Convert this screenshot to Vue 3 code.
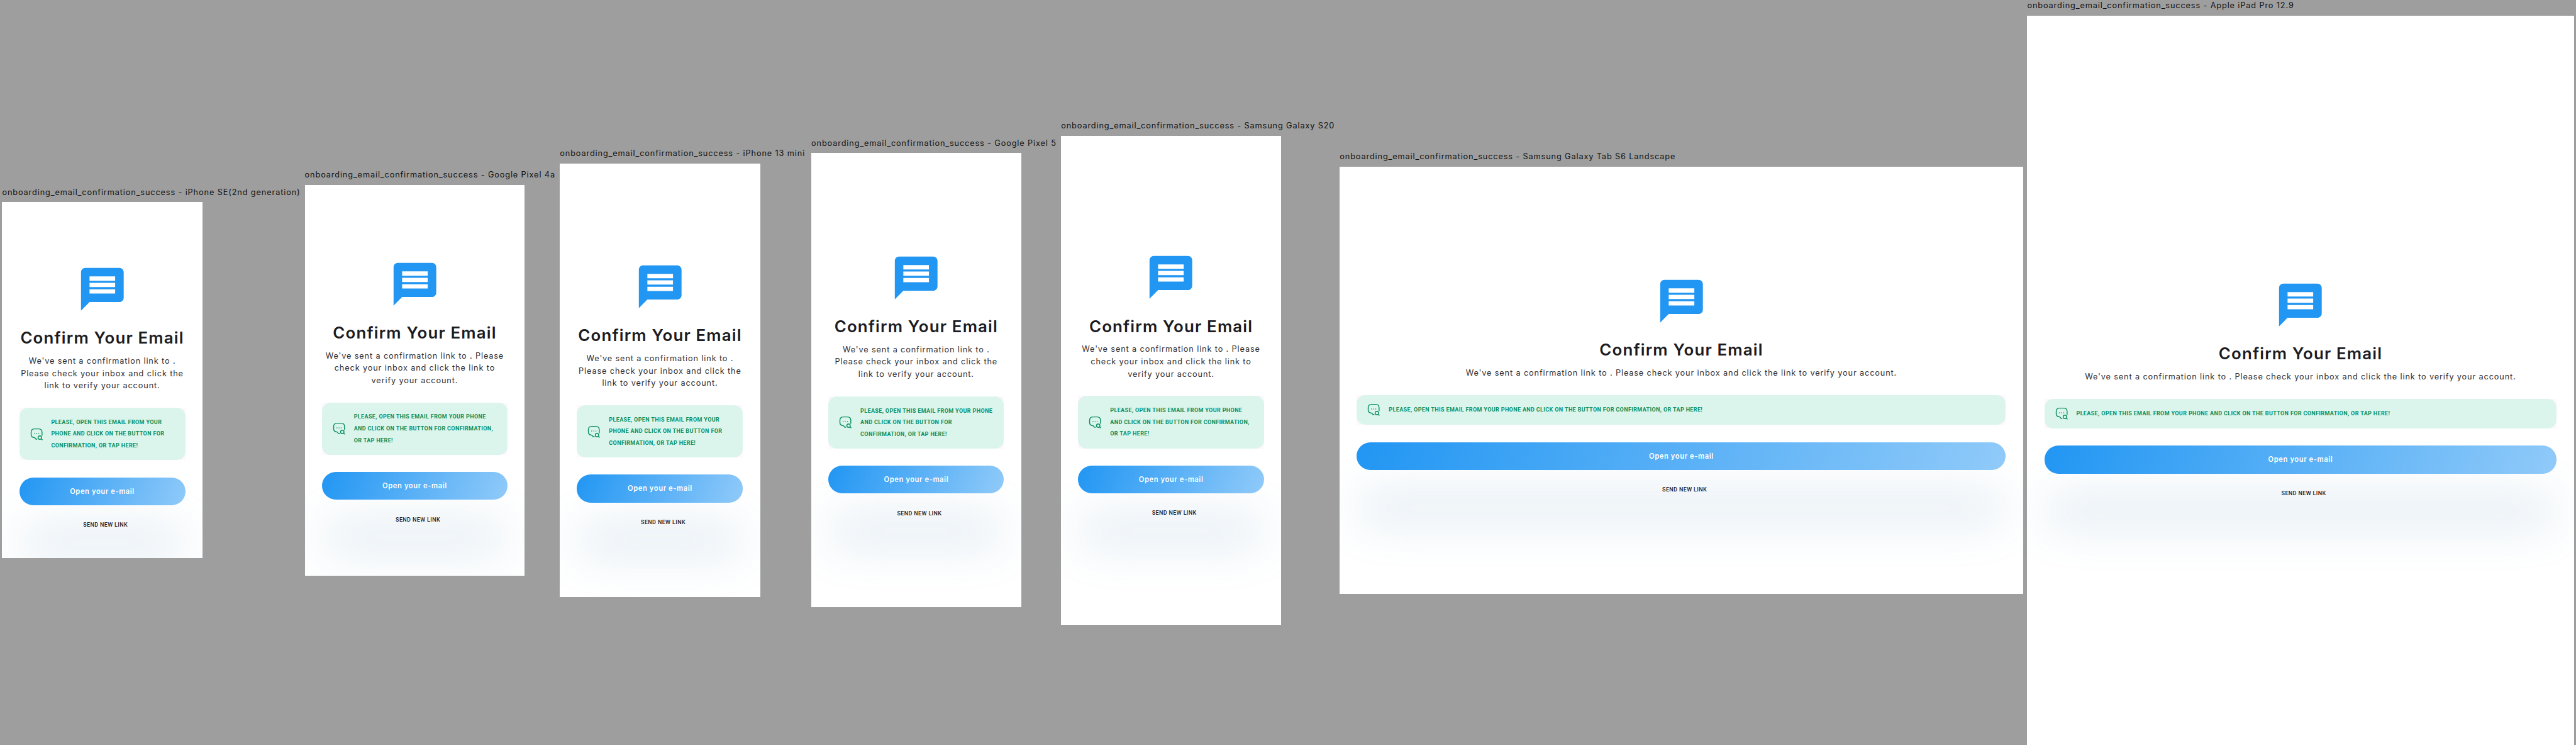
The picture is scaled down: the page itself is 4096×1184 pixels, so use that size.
<script setup>
const suite = 'onboarding_email_confirmation_success'

// slot: width taken in the row; top: distance from the screen edge to the illustration
const devices = [
  { name: 'iPhone SE(2nd generation)', slot: 559, width: 375, height: 667, top: 115.3,
    body: ["We've sent a confirmation link to .", 'Please check your inbox and click the', 'link to verify your account.'],
    hint: ['PLEASE, OPEN THIS EMAIL FROM YOUR', 'PHONE AND CLICK ON THE BUTTON FOR', 'CONFIRMATION, OR TAP HERE!'] },
  { name: 'Google Pixel 4a', slot: 470, width: 412, height: 732, top: 138,
    body: ["We've sent a confirmation link to . Please", 'check your inbox and click the link to', 'verify your account.'],
    hint: ['PLEASE, OPEN THIS EMAIL FROM YOUR PHONE', 'AND CLICK ON THE BUTTON FOR CONFIRMATION,', 'OR TAP HERE!'] },
  { name: 'iPhone 13 mini', slot: 463, width: 375, height: 812, top: 183,
    body: ["We've sent a confirmation link to .", 'Please check your inbox and click the', 'link to verify your account.'],
    hint: ['PLEASE, OPEN THIS EMAIL FROM YOUR', 'PHONE AND CLICK ON THE BUTTON FOR', 'CONFIRMATION, OR TAP HERE!'] },
  { name: 'Google Pixel 5', slot: 460, width: 393, height: 851, top: 185.8,
    body: ["We've sent a confirmation link to .", 'Please check your inbox and click the', 'link to verify your account.'],
    hint: ['PLEASE, OPEN THIS EMAIL FROM YOUR PHONE', 'AND CLICK ON THE BUTTON FOR', 'CONFIRMATION, OR TAP HERE!'] },
  { name: 'Samsung Galaxy S20', slot: 514, width: 412, height: 915, top: 217.2,
    body: ["We've sent a confirmation link to . Please", 'check your inbox and click the link to', 'verify your account.'],
    hint: ['PLEASE, OPEN THIS EMAIL FROM YOUR PHONE', 'AND CLICK ON THE BUTTON FOR CONFIRMATION,', 'OR TAP HERE!'] },
  { name: 'Samsung Galaxy Tab S6 Landscape', slot: 1280, width: 1280, height: 800, top: 204.2,
    body: ["We've sent a confirmation link to . Please check your inbox and click the link to verify your account."],
    hint: ['PLEASE, OPEN THIS EMAIL FROM YOUR PHONE AND CLICK ON THE BUTTON FOR CONFIRMATION, OR TAP HERE!'] },
  { name: 'Apple iPad Pro 12.9', slot: 1024, width: 1024, height: 1366, top: 494.2,
    body: ["We've sent a confirmation link to . Please check your inbox and click the link to verify your account."],
    hint: ['PLEASE, OPEN THIS EMAIL FROM YOUR PHONE AND CLICK ON THE BUTTON FOR CONFIRMATION, OR TAP HERE!'] }
]
</script>

<template>
  <main class="board">
    <section v-for="d in devices" :key="d.name" class="device" :style="{ width: d.slot + 'px' }">
      <div class="label">{{ suite }} - {{ d.name }}</div>
      <div class="screen" :style="{ width: d.width + 'px', height: d.height + 'px', paddingTop: d.top + 'px' }">
        <svg class="message" viewBox="0 0 24 24">
          <path d="M20 2H4c-1.1 0-1.99.9-1.99 2L2 22l4-4h14c1.1 0 2-.9 2-2V4c0-1.1-.9-2-2-2zm-2 12H6v-2h12v2zm0-3H6V9h12v2zm0-3H6V6h12v2z" />
        </svg>
        <h1 class="title">Confirm Your Email</h1>
        <p class="body">
          <span v-for="line in d.body" :key="line" class="line">{{ line }}</span>
        </p>
        <div class="hint-wrap">
          <div class="hint">
            <svg class="hint-icon" viewBox="0 0 24 24">
              <path d="M22.2 14V8.200c0-4.200-2-6.300-6.200-6.300H8c-4.200 0-6.200 2.100-6.200 6.300v4.300c0 4.300 2 5.600 6 5.700.5 0 .9.2 1.200.6l1.200 1.700c.6.900 1.700 1.100 2.600.3" />
              <circle cx="18" cy="18.300" r="3.200" />
              <path d="M20.500 20.700l2 1.600" />
              <path class="dots" d="M8 10.700h.01M12 10.700h.01M16 10.700h.01" />
            </svg>
            <div class="hint-text">
              <span v-for="line in d.hint" :key="line" class="line">{{ line }}</span>
            </div>
          </div>
        </div>
        <button class="primary">Open your e-mail</button>
        <button class="secondary">SEND NEW LINK</button>
      </div>
    </section>
  </main>
</template>

<style>
body {
  margin: 0;
  background: #9e9e9e;
  overflow: hidden;
}
</style>

<style scoped>
.board {
  zoom: 0.84874;
  box-sizing: border-box;
  width: 4826px;
  height: 1395px;
  padding: 0 4px;
  display: flex;
  align-items: center;
  gap: 8px;
  background: #9e9e9e;
  overflow: hidden;
}
.device {
  flex: none;
}
.label {
  height: 29px;
  font: 400 15px/20.6px Inter, sans-serif;
  letter-spacing: 1.03px;
  color: #111;
  white-space: nowrap;
}
.screen {
  box-sizing: border-box;
  display: flex;
  flex-direction: column;
  padding: 0 32px;
  background: #fff;
  overflow: hidden;
}
.message {
  flex: none;
  align-self: center;
  width: 96px;
  height: 96px;
  fill: #2196f3;
}
.title {
  margin: 23.4px 0 0;
  font: 600 30.5px/40px Inter, sans-serif;
  letter-spacing: 1.35px;
  color: #1c1b1f;
  text-align: center;
  white-space: nowrap;
}
.body {
  margin: 11.3px 0 0;
  font: 400 15px/23.2px Inter, sans-serif;
  letter-spacing: 1.02px;
  color: #2f2e32;
  text-align: center;
}
.line {
  display: block;
  white-space: nowrap;
}
.hint-wrap {
  position: relative;
  z-index: 1;
  margin-top: 29.7px;
  background: #fef7ff;
}
.hint {
  display: flex;
  align-items: center;
  gap: 16px;
  padding: 16px 20px;
  border-radius: 16px;
  background: #dcf5ec;
}
.hint-icon {
  flex: none;
  width: 24px;
  height: 24px;
  fill: none;
  stroke: #0a8f5f;
  stroke-width: 1.7;
  stroke-linecap: round;
  stroke-linejoin: round;
}
.dots {
  stroke-width: 1.8;
}
.hint-text {
  font: 700 10.6px/22px Roboto, sans-serif;
  letter-spacing: 0.44px;
  color: #0a8f5f;
  min-height: 24px;
  display: flex;
  flex-direction: column;
  justify-content: center;
}
.primary {
  flex: none;
  height: 52px;
  margin-top: 32px;
  padding: 0;
  border: 0;
  border-radius: 26px;
  background: linear-gradient(110deg, #2196f3, #90caf9);
  box-shadow: 0 96px 88px rgba(91, 145, 185, 0.2);
  font: 600 13.2px/52px Inter, sans-serif;
  letter-spacing: 0.69px;
  color: #fff;
}
.secondary {
  flex: none;
  position: relative;
  height: 52px;
  margin-top: 11.2px;
  padding: 0 0 0 12px;
  border: 0;
  background: none;
  font: 500 10.6px/52px Roboto, sans-serif;
  letter-spacing: 0.44px;
  color: #1c1b1f;
}
</style>
